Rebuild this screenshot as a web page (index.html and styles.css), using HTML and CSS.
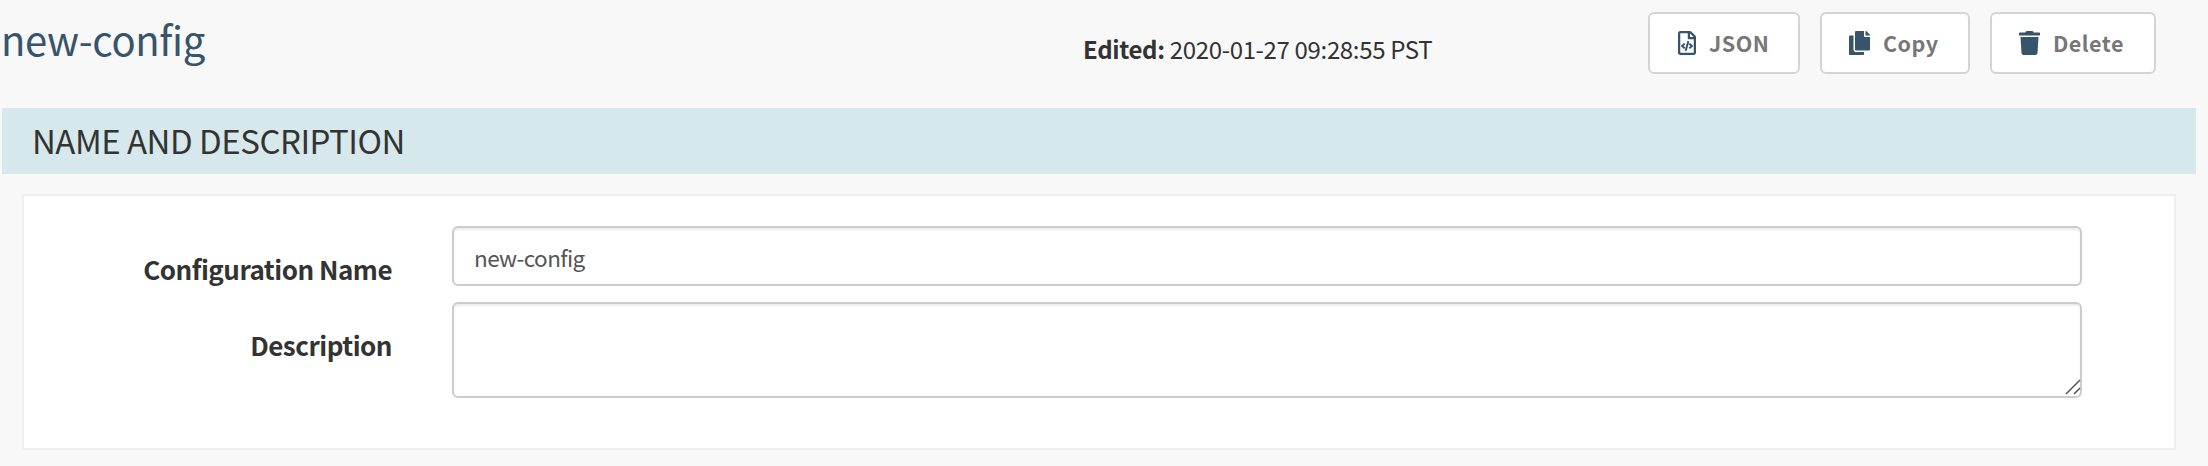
FILE: index.html
```html
<!DOCTYPE html>
<html lang="en">
<head>
<meta charset="utf-8">
<title>new-config</title>
<link rel="stylesheet" href="styles.css">
</head>
<body>
<header class="header">
  <h1 class="title">new-config</h1>
  <p class="edited"><strong class="edited-label">Edited:</strong> 2020-01-27 09:28:55 PST</p>
  <div class="actions">
    <button class="btn btn-json" type="button">
      <svg class="icon" width="18" height="24" viewBox="0 0 384 512"><path d="M149.900 349.100l-.2-.2-32.800-28.900 32.800-28.900c3.600-3.200 4-8.800.8-12.400l-.2-.2-17.400-18.600c-3.400-3.600-9-3.700-12.400-.4l-57.700 54.100c-3.700 3.500-3.700 9.400 0 12.800l57.700 54.100c1.600 1.500 3.800 2.400 6 2.400 2.400 0 4.800-1 6.400-2.800l17.400-18.600c3.300-3.500 3.100-9.100-.4-12.400zm220-251.200L286 14C277 5 264.800-.1 252.100-.1H48C21.500 0 0 21.500 0 48v416c0 26.500 21.500 48 48 48h288c26.500 0 48-21.500 48-48V131.900c0-12.700-5.100-25-14.100-34zM256 51.900l76.100 76.100H256zM336 464H48V48h160v104c0 13.300 10.700 24 24 24h104zM209.600 214c-4.700-1.400-9.500 1.300-10.900 6L144 408.100c-1.400 4.700 1.300 9.600 6 10.900l24.400 7.100c4.700 1.400 9.600-1.400 10.900-6L240 231.900c1.400-4.700-1.300-9.600-6-10.900zm24.500 76.900l.2.2 32.800 28.900-32.800 28.900c-3.600 3.200-4 8.800-.8 12.400l.2.2 17.400 18.600c3.300 3.500 8.900 3.700 12.400.4l57.700-54.100c3.700-3.500 3.700-9.400 0-12.800l-57.700-54.100c-3.500-3.300-9.100-3.200-12.400.4l-17.400 18.600c-3.300 3.500-3.100 9.100.4 12.400z"/></svg>
      <span>JSON</span>
    </button>
    <button class="btn btn-copy" type="button">
      <svg class="icon" width="21" height="24" viewBox="0 0 448 512"><path d="M320 448v40c0 13.255-10.745 24-24 24H24c-13.255 0-24-10.745-24-24V120c0-13.255 10.745-24 24-24h72v296c0 30.879 25.121 56 56 56h168zm0-344V0H152c-13.255 0-24 10.745-24 24v368c0 13.255 10.745 24 24 24h272c13.255 0 24-10.745 24-24V128H344c-13.200 0-24-10.800-24-24zm120.971-31.029L375.029 7.029A24 24 0 0 0 358.059 0H352v96h96v-6.059a24 24 0 0 0-7.029-16.970z"/></svg>
      <span>Copy</span>
    </button>
    <button class="btn btn-delete" type="button">
      <svg class="icon" width="21" height="24" viewBox="0 0 448 512"><path d="M432 32H312l-9.400-18.700A24 24 0 0 0 281.100 0H166.800a23.720 23.720 0 0 0-21.400 13.300L136 32H16A16 16 0 0 0 0 48v32a16 16 0 0 0 16 16h416a16 16 0 0 0 16-16V48a16 16 0 0 0-16-16zM32 128L53.200 467a48 48 0 0 0 47.900 45h245.800a48 48 0 0 0 47.900-45L416 128z"/></svg>
      <span>Delete</span>
    </button>
  </div>
</header>
<h2 class="section-title">NAME AND DESCRIPTION</h2>
<form class="panel">
  <label class="label label-name" for="name">Configuration Name</label>
  <input class="field field-name" id="name" type="text" value="new-config">
  <label class="label label-description" for="description">Description</label>
  <div class="textarea-wrap">
    <textarea class="field field-description" id="description"></textarea>
    <svg class="grip" width="16" height="16" viewBox="0 0 16 16"><path d="M1 15L15 1M9 15L15 9"/></svg>
  </div>
</form>
</body>
</html>
```

FILE: styles.css
```css
* {
  box-sizing: border-box;
}

body {
  margin: 0;
  height: 466px;
  overflow: hidden;
  background: #f8f8f8;
  color: #333;
  font-family: "Noto Sans CJK SC", "Noto Sans", sans-serif;
  font-size: 24px;
}

.header {
  display: grid;
  grid-template-columns: 1081px 565px auto;
  align-items: start;
  height: 108px;
  padding: 12px 0 0 2px;
}

.title {
  margin: 0 0 0 -1px;
  color: #37546b;
  font-size: 40px;
  font-weight: 400;
  line-height: 54px;
  letter-spacing: -.35px;
}

.edited {
  margin: 0;
  padding-top: 11px;
  font-size: 24px;
  line-height: 52px;
  letter-spacing: -.34px;
  white-space: nowrap;
}

.edited-label {
  font-weight: 700;
}

.actions {
  display: flex;
  gap: 20px;
}

.btn {
  display: flex;
  align-items: center;
  height: 62px;
  padding: 0 0 0 27px;
  border: 2px solid #d4d4d4;
  border-radius: 6px;
  background: #fff;
  color: #777;
  font-family: inherit;
  font-size: 21.5px;
  font-weight: 700;
  line-height: 60px;
  letter-spacing: .5px;
  white-space: nowrap;
}

.btn-json {
  width: 152px;
  padding-left: 28px;
  gap: 13px;
}

.btn-copy {
  width: 150px;
  gap: 13px;
}

.btn-delete {
  width: 166px;
  gap: 13px;
}

.icon {
  flex: none;
  fill: #37546b;
}

.section-title {
  width: 2194px;
  height: 66px;
  margin: 0 0 20px 2px;
  padding-left: 30px;
  background: #d6e8eb;
  font-size: 33px;
  font-weight: 400;
  line-height: 64px;
  letter-spacing: -.5px;
}

.panel {
  display: grid;
  grid-template-columns: 368px 1630px;
  grid-template-rows: 60px 96px;
  gap: 16px 60px;
  width: 2154px;
  height: 256px;
  margin-left: 22px;
  padding: 30px 0 0;
  border: 2px solid #eee;
  background: #fff;
}

.label {
  padding-top: 18px;
  font-size: 26px;
  font-weight: 700;
  line-height: 50px;
  letter-spacing: -.5px;
  text-align: right;
  white-space: nowrap;
}

.field {
  display: block;
  width: 100%;
  height: 100%;
  margin: 0;
  padding: 2px 20px 0;
  border: 2px solid #ccc;
  border-radius: 6px;
  outline: 0;
  background: #fff;
  box-shadow: inset 0 2px 2px rgba(0, 0, 0, .075);
  color: #555;
  font-family: inherit;
  font-size: 22.500px;
  letter-spacing: -.6px;
  resize: none;
}

.textarea-wrap {
  position: relative;
}

.grip {
  position: absolute;
  right: 1px;
  bottom: 3px;
  fill: none;
  stroke: #555;
  stroke-width: 1.5;
}
```
